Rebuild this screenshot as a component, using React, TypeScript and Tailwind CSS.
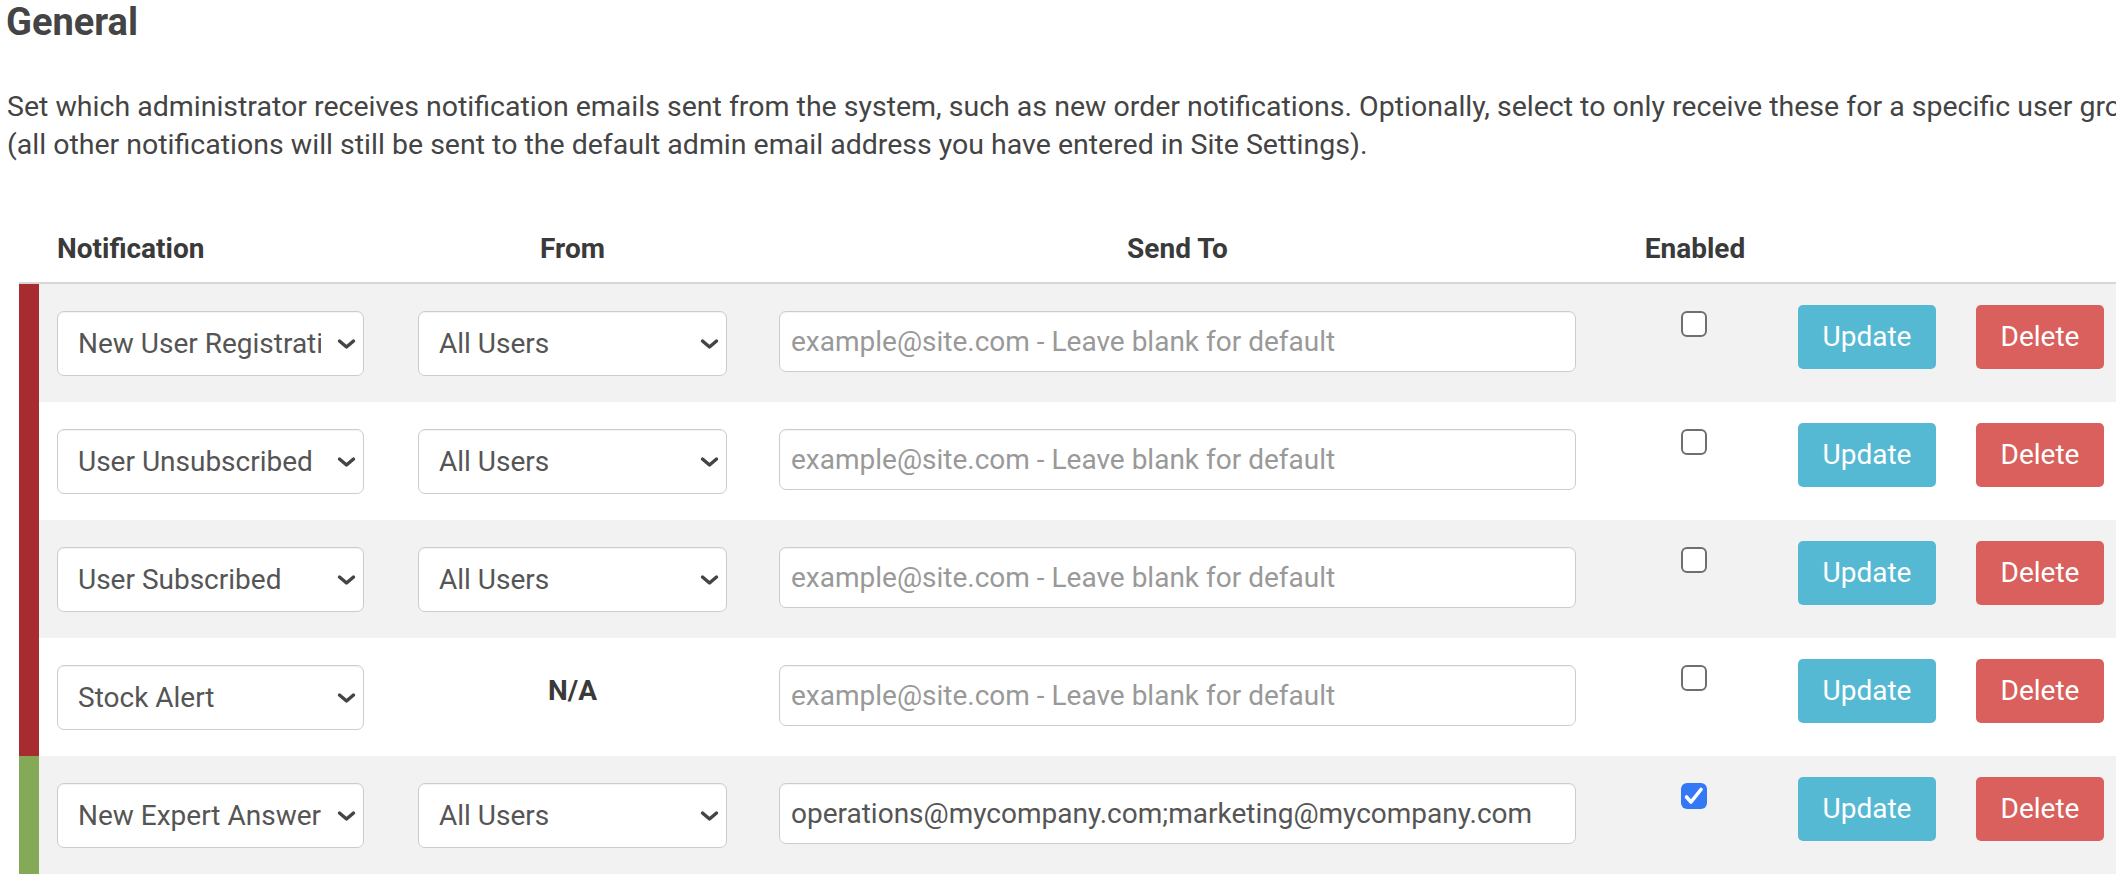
import React from "react";

type Row = { name: string; from: boolean; email: string; checked: boolean; bar: "red" | "green" };

const rows: Row[] = [
  { name: "New User Registration", from: true, email: "", checked: false, bar: "red" },
  { name: "User Unsubscribed", from: true, email: "", checked: false, bar: "red" },
  { name: "User Subscribed", from: true, email: "", checked: false, bar: "red" },
  { name: "Stock Alert", from: false, email: "", checked: false, bar: "red" },
  { name: "New Expert Answer", from: true, email: "operations@mycompany.com;marketing@mycompany.com", checked: true, bar: "green" },
];

function Chevron() {
  return (
    <svg className="absolute right-[7px] top-1/2 -translate-y-1/2" width="19" height="11" viewBox="0 0 19 11" fill="none">
      <polyline points="2.5,2.5 9.5,8.5 16.5,2.5" stroke="#444" strokeWidth="3.4" strokeLinecap="round" strokeLinejoin="round" />
    </svg>
  );
}

function FakeSelect({ value, width }: { value: string; width: string }) {
  return (
    <div className={`relative mt-[27px] h-[65px] ${width} shrink-0 rounded-[7px] border border-[#cccccc] bg-white shadow-[inset_0_1px_1px_rgba(0,0,0,0.05)]`}>
      <div className="flex h-full items-center overflow-hidden whitespace-nowrap pl-[20px] pr-[42px] text-[28px] text-[#555]">
        <span className="overflow-hidden">{value}</span>
      </div>
      <Chevron />
    </div>
  );
}

function Checkbox({ checked }: { checked: boolean }) {
  if (checked) {
    return (
      <div className="flex h-[26px] w-[26px] items-center justify-center rounded-[6px] bg-[#3478f6]">
        <svg width="26" height="26" viewBox="0 0 26 26" fill="none">
          <polyline points="5.5,14 10,19 20,6.5" stroke="white" strokeWidth="3.6" strokeLinecap="round" strokeLinejoin="round" />
        </svg>
      </div>
    );
  }
  return <div className="h-[26px] w-[26px] rounded-[6px] border-[2.5px] border-[#6f6f6f] bg-white" />;
}

export default function App() {
  return (
    <div className="h-[880px] w-[2116px] overflow-hidden bg-white font-['Roboto',sans-serif] text-[#444]">
      <h3 className="pl-[6px] text-[38px] font-bold leading-[44px] text-[#444]">General</h3>
      <p className="mt-[44px] whitespace-nowrap pl-[7px] text-[28.5px] leading-[38px] text-[#444]">
        Set which administrator receives notification emails sent from the system, such as new order notifications. Optionally, select to only receive these for a specific user group
        <br />
        (all other notifications will still be sent to the default admin email address you have entered in Site Settings).
      </p>

      <div className="mt-[68px] ml-[19px]">
        <div className="flex pb-[16px] text-[28px] font-bold leading-[34px] text-[#3a3a3a]">
          <div className="ml-[38px] w-[307px] shrink-0">Notification</div>
          <div className="ml-[54px] w-[309px] shrink-0 text-center">From</div>
          <div className="ml-[52px] w-[797px] shrink-0 text-center">Send To</div>
          <div className="ml-[106px] flex w-[26px] shrink-0 justify-center whitespace-nowrap">Enabled</div>
        </div>
        <div className="border-t-[2px] border-[#d6d6d6]">
          {rows.map((r, i) => (
            <div
              key={r.name}
              className={`flex h-[118px] items-start border-l-[20px] ${r.bar === "red" ? "border-[#a62c30]" : "border-[#85aa57]"} ${i % 2 === 0 ? "bg-[#f2f2f2]" : "bg-white"}`}
            >
              <div className="ml-[18px]">
                <FakeSelect value={r.name} width="w-[307px]" />
              </div>
              <div className="ml-[54px] w-[309px] shrink-0">
                {r.from ? (
                  <FakeSelect value="All Users" width="w-[309px]" />
                ) : (
                  <div className="mt-[38px] text-center text-[28px] font-bold leading-[30px] text-[#3a3a3a]">N/A</div>
                )}
              </div>
              <div className="ml-[52px] mt-[27px] flex h-[61px] w-[797px] shrink-0 items-center rounded-[7px] border border-[#cccccc] bg-white px-[11px] text-[28px] shadow-[inset_0_1px_1px_rgba(0,0,0,0.05)]">
                {r.email ? (
                  <span className="whitespace-nowrap text-[#555]">{r.email}</span>
                ) : (
                  <span className="whitespace-nowrap text-[#999]">example@site.com - Leave blank for default</span>
                )}
              </div>
              <div className="ml-[105px] mt-[27px] shrink-0">
                <Checkbox checked={r.checked} />
              </div>
              <button className="ml-[91px] mt-[21px] h-[64px] w-[138px] shrink-0 rounded-[5px] bg-[#55b9d3] text-[28px] text-white">
                Update
              </button>
              <button className="ml-[40px] mt-[21px] h-[64px] w-[128px] shrink-0 rounded-[5px] bg-[#d9605c] text-[28px] text-white">
                Delete
              </button>
            </div>
          ))}
        </div>
      </div>
    </div>
  );
}
